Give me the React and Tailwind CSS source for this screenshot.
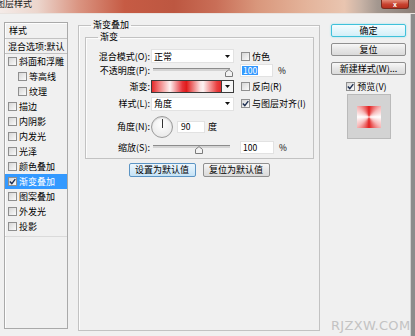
import React from "react";

const CJK = "font-['Noto_Sans_CJK_SC','Noto_Sans',sans-serif]";

// 左侧样式列表
const styleItems = [
  { label: "斜面和浮雕" },
  { label: "等高线", indent: true },
  { label: "纹理", indent: true },
  { label: "描边" },
  { label: "内阴影" },
  { label: "内发光" },
  { label: "光泽" },
  { label: "颜色叠加" },
  { label: "渐变叠加", selected: true },
  { label: "图案叠加" },
  { label: "外发光" },
  { label: "投影" },
];

function Check({ checked }) {
  return (
    <span className="flex h-[9px] w-[9px] shrink-0 items-center justify-center border border-[#8f8f8f] bg-[linear-gradient(135deg,#d6d6d6,#fbfbfb)]">
      {checked && (
        <svg viewBox="0 0 7 7" className="h-[7px] w-[7px]">
          <path d="M0.8 3.6 L2.8 5.6 L6.3 1.1" fill="none" stroke="#1d2f52" strokeWidth="1.4" />
        </svg>
      )}
    </span>
  );
}

function Arrow() {
  return (
    <svg width="5" height="3" viewBox="0 0 5 3">
      <path d="M0 0H5L2.5 3Z" fill="#111" />
    </svg>
  );
}

function Select({ value }) {
  return (
    <div className="ml-[1px] flex h-[14px] w-[83px] items-center justify-between border border-[#e2e2e2] bg-white pl-[2px] pr-[3px]">
      <span>{value}</span>
      <Arrow />
    </div>
  );
}

function Slider({ thumb, top }) {
  return (
    <div className="relative ml-[1px] h-full w-[83px]">
      <div className="absolute left-[2px] w-[77px] h-[3px] border-t border-[#8c8c8c] bg-[#d4d4d4]" style={{ top }} />
      <svg width="8" height="8" viewBox="0 0 8 8" className="absolute" style={{ left: thumb, top: top + 1 }}>
        <path d="M0.5 7.5V3.4L4 0.6L7.5 3.4V7.5Z" fill="#f3f3f3" stroke="#7b7b7b" />
      </svg>
    </div>
  );
}

function Label({ children }) {
  return <span className="w-[64px] shrink-0 text-right">{children}</span>;
}

function Btn({ children, kind }) {
  const look =
    kind === "default"
      ? "border-[#3fc1da] bg-[linear-gradient(#f4fcfe,#d3eff8)] shadow-[0_0_2px_#8fdcec]"
      : kind === "focus"
      ? "border-[#5b94c4] bg-[linear-gradient(#ecf6fd,#c4e2f6)]"
      : "border-[#8f8f8f] bg-[linear-gradient(#f7f7f7,#e6e6e6_50%,#dadada)]";
  return (
    <div className={`flex h-full items-center justify-center rounded-[2px] border ${look}`}>{children}</div>
  );
}

function TitleBar() {
  return (
    <div className="flex h-[14px] shrink-0 items-start justify-between border-b border-[#e9e3df] bg-[linear-gradient(90deg,#f4ebe8_0%,#ecd6cd_9%,#da9481_19%,#c65b44_30%,#bd5741_42%,#c96e57_52%,#d9977c_62%,#e4b49b_74%,#e9c5b0_83%,#c8b3a6_87%,#a3978f_91%,#8b7f78_100%)]">
      <span className="-ml-[4px] -mt-[2px] text-[9px] leading-[11px] text-[#1a1a1a]">图层样式</span>
      <div className="mr-[6px] flex h-[9px] w-[28px] items-center justify-center rounded-b-[3px] border border-t-0 border-[#7a2a1e] bg-[linear-gradient(#e38c78,#c8412f_55%,#b5301f)] text-[7px] font-bold leading-[7px] text-white">
        x
      </div>
    </div>
  );
}

function LeftPanel() {
  return (
    <div className="mt-[3px] flex h-[307px] w-[64px] shrink-0 flex-col border border-[#a9a9a9] shadow-[inset_1px_1px_0_#fdfdfd]">
      <div className="flex h-[16px] shrink-0 items-center border-b border-[#c2c2c2] pl-[4px]">样式</div>
      <div className="flex h-[15px] shrink-0 items-center border-b border-[#c2c2c2] pl-[3px]">混合选项:默认</div>
      {styleItems.map((it) => (
        <div
          key={it.label}
          className={`flex h-[15px] shrink-0 items-center gap-[2px] ${it.indent ? "pl-[13px]" : "pl-[3px]"} ${
            it.selected ? "bg-[#3399ff] text-white" : ""
          }`}
        >
          <Check checked={it.selected} />
          <span>{it.label}</span>
        </div>
      ))}
      <div className="mt-[2px] border-t border-[#dadada]" />
    </div>
  );
}

function Middle() {
  return (
    <fieldset className="ml-[10px] h-[312px] w-[242px] shrink-0 border border-[#c2c2c2] shadow-[inset_1px_1px_0_#fcfcfc]">
      <legend className="ml-[12px] px-[2px] leading-[12px]">渐变叠加</legend>
      <fieldset className="ml-[6px] mr-[5px] border border-[#c2c2c2] pb-[4px] pt-[6px] shadow-[inset_1px_1px_0_#fcfcfc]">
        <legend className="ml-[12px] px-[2px] leading-[12px]">渐变</legend>

        <div className="flex h-[14px] items-center">
          <Label>混合模式(O):</Label>
          <Select value="正常" />
          <div className="ml-[7px] flex items-center gap-[2px]">
            <Check />
            <span>仿色</span>
          </div>
        </div>

        <div className="flex h-[15px] items-center">
          <Label>不透明度(P):</Label>
          <Slider thumb={74} top={5} />
          <div className="ml-[6px] flex h-[13px] w-[33px] items-center border border-[#e2e2e2] bg-white pl-[1px]">
            <span className="bg-[#3399ff] px-[1px] text-[8.5px] leading-[9px] text-white">100</span>
          </div>
          <span className="ml-[5px] text-[8.5px]">%</span>
        </div>

        <div className="flex h-[17px] items-center">
          <Label>渐变:</Label>
          <div className="ml-[1px] flex h-[13px] w-[83px]">
            <div className="h-full w-[71px] border border-[#3c3c3c] bg-[linear-gradient(90deg,#e42a2a_0%,#f07a7a_10%,#fdf1f1_26%,#e6343a_44%,#e01b1b_50%,#fbe3e3_70%,#fdf3f3_74%,#e94040_94%,#e42a2a_100%)]" />
            <div className="flex h-full w-[12px] items-center justify-center border border-l-0 border-[#3c3c3c] bg-[#f6f6f6]">
              <Arrow />
            </div>
          </div>
          <div className="ml-[7px] flex items-center gap-[2px]">
            <Check />
            <span>反向(R)</span>
          </div>
        </div>

        <div className="flex h-[17px] items-center">
          <Label>样式(L):</Label>
          <Select value="角度" />
          <div className="ml-[7px] flex items-center gap-[2px]">
            <Check checked />
            <span>与图层对齐(I)</span>
          </div>
        </div>

        <div className="flex h-[29px] items-center">
          <Label>角度(N):</Label>
          <div className="ml-[1px] flex h-[22px] w-[22px] shrink-0 justify-center rounded-full border border-[#9b9b9b] bg-[radial-gradient(circle_at_50%_35%,#ffffff,#e4e4e4)] shadow-[inset_0_1px_1px_rgba(0,0,0,0.12)]">
            <div className="mt-[2px] h-[9px] w-px bg-[#333]" />
          </div>
          <div className="ml-[4px] flex h-[12px] w-[28px] items-center border border-[#e2e2e2] bg-white pl-[3px] text-[8.5px]">90</div>
          <span className="ml-[3px]">度</span>
        </div>

        <div className="flex h-[13px] items-center">
          <Label>缩放(S):</Label>
          <Slider thumb={44} top={4} />
          <div className="ml-[6px] flex h-[13px] w-[34px] items-center border border-[#e2e2e2] bg-white pl-[2px] text-[8.5px]">100</div>
          <span className="ml-[5px] text-[8.5px]">%</span>
        </div>
      </fieldset>

      <div className="mt-[4px] flex justify-center gap-[7px]">
        <div className="h-[14px] w-[67px]">
          <Btn kind="focus">
            <span className="leading-[12px]">设置为默认值</span>
          </Btn>
        </div>
        <div className="h-[14px] w-[67px]">
          <Btn>
            <span className="leading-[12px]">复位为默认值</span>
          </Btn>
        </div>
      </div>
    </fieldset>
  );
}

function RightCol() {
  return (
    <div className="ml-[11px] flex w-[75px] shrink-0 flex-col">
      <div className="mt-[5px] h-[13px]">
        <Btn kind="default">
          <span className="leading-[11px]">确定</span>
        </Btn>
      </div>
      <div className="mt-[6px] h-[13px]">
        <Btn>
          <span className="leading-[11px]">复位</span>
        </Btn>
      </div>
      <div className="mt-[6px] h-[13px]">
        <Btn>
          <span className="leading-[11px]">新建样式(W)...</span>
        </Btn>
      </div>
      <div className="mt-[7px] flex h-[9px] items-center justify-center gap-[2px] pr-[4px]">
        <Check checked />
        <span>预览(V)</span>
      </div>
      <div className="mx-auto mt-[3px] flex h-[45px] w-[44px] items-center justify-center border border-[#bababa] bg-[#d3d3d3]">
        <div className="h-[22px] w-[24px] bg-[conic-gradient(#e21e1e,#f7b9b9_14%,#ffffff_25%,#f7b9b9_36%,#e21e1e_50%,#f7b9b9_64%,#ffffff_75%,#f7b9b9_86%,#e21e1e)]" />
      </div>
      <div className="-mr-[2px] mb-[4px] mt-auto text-right font-['DejaVu_Sans',sans-serif] text-[13px] leading-[13px] tracking-[0.3px] text-[#c3c3c3]">
        RJZXW.COM
      </div>
    </div>
  );
}

export default function App() {
  return (
    <div className={`flex h-[336px] w-[415px] flex-col overflow-hidden bg-[#f0f0f0] text-[9px] leading-none text-black ${CJK}`}>
      <TitleBar />
      <div className="flex flex-1">
        <div className="flex w-[410px] pl-[4px] pt-[5px]">
          <LeftPanel />
          <Middle />
          <RightCol />
        </div>
        <div className="w-[5px] border-l border-[#cfcfcf] bg-[#8c8c8c]" />
      </div>
    </div>
  );
}
